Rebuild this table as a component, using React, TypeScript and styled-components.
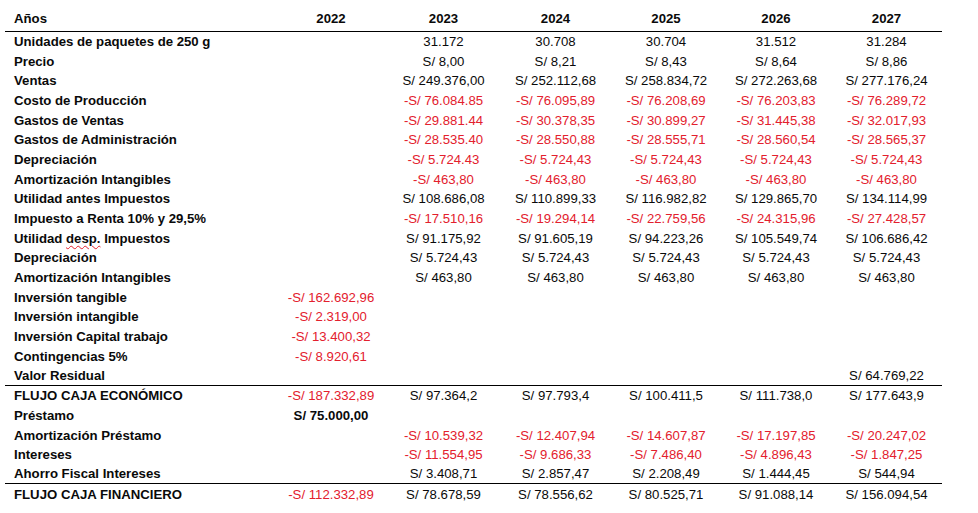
import React from "react";
import styled, { createGlobalStyle } from "styled-components";

const GlobalStyle = createGlobalStyle`
  html, body { margin: 0; padding: 0; background: #ffffff; }
  body { font-family: "Liberation Sans", Arial, sans-serif; }
`;

const Sheet = styled.div`
  padding: 7px 0 0 5px;
  width: 937px;
`;

const Grid = styled.div`
  display: grid;
  grid-template-columns: 270px 112px 113px 111px 110px 110px 111px;
`;

const Row = styled.div<{ $head?: boolean; $rule?: boolean }>`
  display: contents;
  & > div {
    height: ${(p) => (p.$head ? "24.5px" : "19.7px")};
    box-sizing: border-box;
    border-bottom: ${(p) => (p.$rule || p.$head ? "1px solid #000" : "none")};
  }
`;

const Label = styled.div`
  display: flex;
  align-items: center;
  padding-left: 9px;
  font-size: 13.2px;
  font-weight: 700;
  color: #0a0a0a;
  white-space: pre;
`;

const Cell = styled.div<{ $neg?: boolean; $bold?: boolean; $head?: boolean }>`
  display: flex;
  align-items: center;
  justify-content: center;
  font-size: 13.2px;
  font-weight: ${(p) => (p.$bold || p.$head ? 700 : 400)};
  color: ${(p) => (p.$neg ? "#e3202d" : "#0a0a0a")};
  white-space: nowrap;
`;

const Squiggle = styled.span`
  text-decoration: underline wavy #e3202d;
  text-decoration-thickness: 1px;
  text-underline-offset: 2px;
`;

type RowData = {
  label: React.ReactNode;
  values: string[];
  rule?: boolean;
  bold2022?: boolean;
};

const e = "";

const rows: RowData[] = [
  { label: "Unidades de paquetes de 250 g", values: [e, "31.172", "30.708", "30.704", "31.512", "31.284"] },
  { label: "Precio", values: [e, "S/ 8,00", "S/ 8,21", "S/ 8,43", "S/ 8,64", "S/ 8,86"] },
  { label: "Ventas", values: [e, "S/ 249.376,00", "S/ 252.112,68", "S/ 258.834,72", "S/ 272.263,68", "S/ 277.176,24"] },
  { label: "Costo de Producción", values: [e, "-S/ 76.084.85", "-S/ 76.095,89", "-S/ 76.208,69", "-S/ 76.203,83", "-S/ 76.289,72"] },
  { label: "Gastos de Ventas", values: [e, "-S/ 29.881.44", "-S/ 30.378,35", "-S/ 30.899,27", "-S/ 31.445,38", "-S/ 32.017,93"] },
  { label: "Gastos de Administración", values: [e, "-S/ 28.535.40", "-S/ 28.550,88", "-S/ 28.555,71", "-S/ 28.560,54", "-S/ 28.565,37"] },
  { label: "Depreciación", values: [e, "-S/ 5.724.43", "-S/ 5.724,43", "-S/ 5.724,43", "-S/ 5.724,43", "-S/ 5.724,43"] },
  { label: "Amortización Intangibles", values: [e, "-S/ 463,80", "-S/ 463,80", "-S/ 463,80", "-S/ 463,80", "-S/ 463,80"] },
  { label: "Utilidad antes Impuestos", values: [e, "S/ 108.686,08", "S/ 110.899,33", "S/ 116.982,82", "S/ 129.865,70", "S/ 134.114,99"] },
  { label: "Impuesto a Renta 10% y 29,5%", values: [e, "-S/ 17.510,16", "-S/ 19.294,14", "-S/ 22.759,56", "-S/ 24.315,96", "-S/ 27.428,57"] },
  {
    label: (
      <span>
        Utilidad <Squiggle>desp.</Squiggle> Impuestos
      </span>
    ),
    values: [e, "S/ 91.175,92", "S/ 91.605,19", "S/ 94.223,26", "S/ 105.549,74", "S/ 106.686,42"],
  },
  { label: "Depreciación", values: [e, "S/ 5.724,43", "S/ 5.724,43", "S/ 5.724,43", "S/ 5.724,43", "S/ 5.724,43"] },
  { label: "Amortización Intangibles", values: [e, "S/ 463,80", "S/ 463,80", "S/ 463,80", "S/ 463,80", "S/ 463,80"] },
  { label: "Inversión tangible", values: ["-S/ 162.692,96", e, e, e, e, e] },
  { label: "Inversión intangible", values: ["-S/ 2.319,00", e, e, e, e, e] },
  { label: "Inversión Capital trabajo", values: ["-S/ 13.400,32", e, e, e, e, e] },
  { label: "Contingencias 5%", values: ["-S/ 8.920,61", e, e, e, e, e] },
  { label: "Valor Residual", values: [e, e, e, e, e, "S/ 64.769,22"], rule: true },
  { label: "FLUJO CAJA ECONÓMICO", values: ["-S/ 187.332,89", "S/ 97.364,2", "S/ 97.793,4", "S/ 100.411,5", "S/ 111.738,0", "S/ 177.643,9"] },
  { label: "Préstamo", values: ["S/ 75.000,00", e, e, e, e, e], bold2022: true },
  { label: "Amortización Préstamo", values: [e, "-S/ 10.539,32", "-S/ 12.407,94", "-S/ 14.607,87", "-S/ 17.197,85", "-S/ 20.247,02"] },
  { label: "Intereses", values: [e, "-S/ 11.554,95", "-S/ 9.686,33", "-S/ 7.486,40", "-S/ 4.896,43", "-S/ 1.847,25"] },
  { label: "Ahorro Fiscal Intereses", values: [e, "S/ 3.408,71", "S/ 2.857,47", "S/ 2.208,49", "S/ 1.444,45", "S/ 544,94"], rule: true },
  { label: "FLUJO CAJA FINANCIERO", values: ["-S/ 112.332,89", "S/ 78.678,59", "S/ 78.556,62", "S/ 80.525,71", "S/ 91.088,14", "S/ 156.094,54"] },
];

const years = ["2022", "2023", "2024", "2025", "2026", "2027"];

export default function App() {
  return (
    <>
      <GlobalStyle />
      <Sheet>
        <Grid>
          <Row $head>
            <Label>Años</Label>
            {years.map((y) => (
              <Cell key={y} $head>
                {y}
              </Cell>
            ))}
          </Row>
          {rows.map((r, i) => (
            <Row key={i} $rule={r.rule}>
              <Label>{r.label}</Label>
              {r.values.map((v, j) => (
                <Cell key={j} $neg={v.startsWith("-")} $bold={j === 0 && r.bold2022}>
                  {v}
                </Cell>
              ))}
            </Row>
          ))}
        </Grid>
      </Sheet>
    </>
  );
}
